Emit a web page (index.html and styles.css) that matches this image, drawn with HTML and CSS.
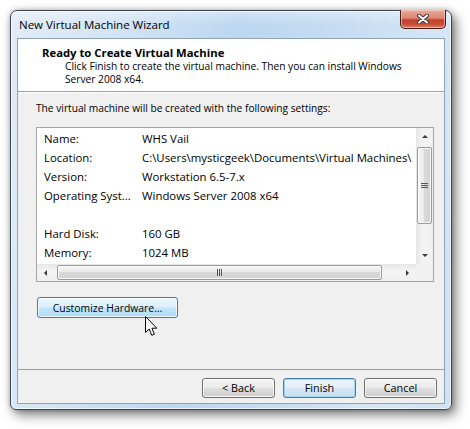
FILE: index.html
```html
<!DOCTYPE html>
<html>
<head>
<meta charset="utf-8">
<link rel="stylesheet" href="styles.css">
</head>
<body>
<div class="window">
  <div class="titlebar">
    <span class="title">New Virtual Machine Wizard</span>
    <div class="close">
      <svg width="12" height="10" viewBox="0 0 12 10">
        <path d="M2 1.5 L10 8.5 M10 1.5 L2 8.5" stroke="#3a3a3a" stroke-width="4" stroke-linecap="round"/>
        <path d="M2 1.5 L10 8.5 M10 1.5 L2 8.5" stroke="#fff" stroke-width="2" stroke-linecap="round"/>
      </svg>
    </div>
  </div>
  <div class="content">
    <div class="header">
      <div class="h-title">Ready to Create Virtual Machine</div>
      <div class="h-sub">Click Finish to create the virtual machine. Then you can install Windows Server 2008 x64.</div>
    </div>
    <div class="main">
      <div class="intro">The virtual machine will be created with the following settings:</div>
      <div class="listbox">
        <div class="rows">
          <div class="row"><span class="lbl">Name:</span><span class="val">WHS Vail</span></div>
          <div class="row"><span class="lbl">Location:</span><span class="val">C:\Users\mysticgeek\Documents\Virtual Machines\</span></div>
          <div class="row"><span class="lbl">Version:</span><span class="val">Workstation 6.5-7.x</span></div>
          <div class="row"><span class="lbl">Operating Syst...</span><span class="val">Windows Server 2008 x64</span></div>
          <div class="row"></div>
          <div class="row"><span class="lbl">Hard Disk:</span><span class="val">160 GB</span></div>
          <div class="row"><span class="lbl">Memory:</span><span class="val">1024 MB</span></div>
        </div>
        <div class="vscroll">
          <div class="arrow-btn"><span class="tri up"></span></div>
          <div class="vtrack"><div class="vthumb"><span class="grip-h"></span></div></div>
          <div class="arrow-btn"><span class="tri down"></span></div>
        </div>
        <div class="hscroll">
          <div class="arrow-btn h"><span class="tri left"></span></div>
          <div class="htrack"><div class="hthumb"><span class="grip-v"></span></div></div>
          <div class="arrow-btn h"><span class="tri right"></span></div>
        </div>
        <div class="corner"></div>
      </div>
      <button class="btn hover custom">Customize Hardware…</button>
    </div>
    <div class="footer">
      <button class="btn">&lt; Back</button>
      <button class="btn default">Finish</button>
      <button class="btn">Cancel</button>
    </div>
  </div>
</div>
<svg class="cursor" width="14" height="21" viewBox="0 0 14 21">
  <path d="M0.5 0.5 V16.5 L4.2 13 L6.8 19.3 L9.4 18.2 L6.9 12.2 H11.8 Z" fill="#fff" stroke="#000" stroke-width="1" stroke-linejoin="miter"/>
</svg>
</body>
</html>
```

FILE: styles.css
```css
html, body {
  margin: 0;
  padding: 0;
  background: #ffffff;
}
body {
  font-family: "Open Sans", "Noto Sans", sans-serif;
  font-size: 10.2px;
  color: #000;
  position: relative;
  width: 470px;
  height: 429px;
  overflow: hidden;
}
.window {
  margin: 10px 0 0 10px;
  width: 442px;
  height: 400px;
  box-sizing: border-box;
  border: 1px solid #3b4450;
  border-radius: 7px 7px 6px 6px;
  background: linear-gradient(180deg, rgba(255,255,255,0.35) 0px, rgba(255,255,255,0) 14px),
              linear-gradient(100deg, #e2ecf7 0%, #d3e4f5 22%, #bcd7f1 45%, #c4dbf2 62%, #d6e6f6 85%, #cfe1f4 100%);
  box-shadow: inset 0 0 0 1px rgba(255,255,255,0.65), 4px 5px 12px rgba(0,0,0,0.5), 0 0 5px rgba(0,0,0,0.25);
  display: flex;
  flex-direction: column;
  padding: 0 6px 5px 6px;
}
.titlebar {
  height: 27px;
  display: flex;
  justify-content: space-between;
  align-items: flex-start;
}
.title {
  margin: 7px 0 0 2px;
  font-size: 11.5px;
  line-height: 14px;
  color: #000;
}
.close {
  margin-top: -1px;
  margin-right: -1px;
  width: 46px;
  height: 19px;
  box-sizing: border-box;
  border: 1px solid #4a1a14;
  border-top: 0;
  border-radius: 0 0 5px 5px;
  background: linear-gradient(180deg, #e9aa9b 0%, #dd8572 45%, #c3412b 55%, #c8503a 80%, #d8826a 100%);
  box-shadow: inset 0 0 0 1px rgba(255,220,210,0.55);
  display: flex;
  align-items: center;
  justify-content: center;
}
.content {
  flex: 1;
  border: 1px solid #8ea2b8;
  background: #f0f0f0;
  display: flex;
  flex-direction: column;
}
.header {
  background: #fff;
  height: 53px;
  box-sizing: border-box;
  border-bottom: 1px solid #a0a0a0;
  padding: 7px 0 0 24px;
}
.h-title {
  font-weight: bold;
  font-size: 11.3px;
  line-height: 14px;
}
.h-sub {
  margin: 0 0 0 23px;
  line-height: 13px;
  width: 360px;
}
.main {
  flex: 1;
  padding: 8px 0 0 18px;
  border-top: 1px solid #fff;
}
.intro {
  line-height: 14px;
}
.listbox {
  margin-top: 12px;
  width: 398px;
  height: 155px;
  box-sizing: border-box;
  border: 1px solid #a5a5a5;
  background: #fff;
  display: grid;
  grid-template-columns: 1fr 17px;
  grid-template-rows: 1fr 17px;
}
.rows {
  overflow: hidden;
  padding: 1px 0 0 7px;
  font-size: 11.4px;
}
.row {
  height: 19px;
  line-height: 19px;
  display: flex;
  white-space: nowrap;
}
.lbl {
  width: 98px;
  flex: none;
}
.val {
  flex: none;
}
.vscroll {
  display: flex;
  flex-direction: column;
  background: linear-gradient(90deg, #e6e6e6, #f4f4f4 40%, #f0f0f0);
}
.arrow-btn {
  height: 17px;
  display: flex;
  align-items: center;
  justify-content: center;
  flex: none;
}
.arrow-btn.h {
  width: 17px;
  height: auto;
}
.tri {
  width: 0;
  height: 0;
  border: 3.5px solid transparent;
}
.tri.up { border-bottom: 3.5px solid #3a3a3a; border-top-width: 0; }
.tri.down { border-top: 3.5px solid #3a3a3a; border-bottom-width: 0; }
.tri.left { border-right: 3.5px solid #3a3a3a; border-left-width: 0; }
.tri.right { border-left: 3.5px solid #3a3a3a; border-right-width: 0; }
.vtrack {
  flex: 1;
  padding: 2px 1px 23px 1px;
  display: flex;
}
.vthumb {
  flex: 1;
  border: 1px solid #9a9a9a;
  border-radius: 2px;
  background: linear-gradient(90deg, #f5f5f5, #e9e9e9 50%, #d9d9d9 50%, #d2d2d2);
  box-shadow: inset 0 0 0 1px rgba(255,255,255,0.8);
  display: flex;
  align-items: center;
  justify-content: center;
}
.grip-h {
  width: 7px;
  height: 5px;
  background: repeating-linear-gradient(180deg, #555 0 1px, transparent 1px 2px);
}
.hscroll {
  display: flex;
  background: linear-gradient(180deg, #e6e6e6, #f4f4f4 40%, #f0f0f0);
}
.htrack {
  flex: 1;
  padding: 1px 0 1px 3px;
  display: flex;
  margin-right: 17px;
}
.hthumb {
  flex: 1;
  border: 1px solid #9a9a9a;
  border-radius: 2px;
  background: linear-gradient(180deg, #f5f5f5, #e9e9e9 50%, #d9d9d9 50%, #d2d2d2);
  box-shadow: inset 0 0 0 1px rgba(255,255,255,0.8);
  display: flex;
  align-items: center;
  justify-content: center;
}
.grip-v {
  width: 5px;
  height: 7px;
  background: repeating-linear-gradient(90deg, #555 0 1px, transparent 1px 2px);
}
.corner {
  background: #f0f0f0;
}
.btn {
  font-family: inherit;
  font-size: 10.8px;
  color: #000;
  box-sizing: border-box;
  height: 20px;
  width: 73px;
  padding: 0;
  border: 1px solid #707070;
  border-radius: 3px;
  background: linear-gradient(180deg, #f3f3f3 0%, #ebebeb 48%, #dedede 52%, #d0d0d0 100%);
  box-shadow: inset 0 0 0 1px rgba(255,255,255,0.75);
  line-height: 16px;
}
.btn.hover {
  border-color: #3c7fb1;
  background: linear-gradient(180deg, #ebf6fd 0%, #dcf0fc 48%, #c3e6fb 52%, #addcf6 100%);
}
.btn.custom {
  display: block;
  margin: 15px 0 0 1px;
  width: 141px;
  height: 21px;
  font-size: 10.4px;
}
.btn.default {
  border-color: #3c7fb1;
  background: linear-gradient(180deg, #eef5fb 0%, #e4eef8 48%, #d6e6f4 52%, #c9deef 100%);
  box-shadow: inset 0 0 0 1px #9fd6f5;
}
.footer {
  border-top: 1px solid #a0a0a0;
  padding: 8px 7px 5px 0;
  display: flex;
  justify-content: flex-end;
  gap: 8px;
}
.cursor {
  position: absolute;
  left: 145px;
  top: 316px;
}
```
